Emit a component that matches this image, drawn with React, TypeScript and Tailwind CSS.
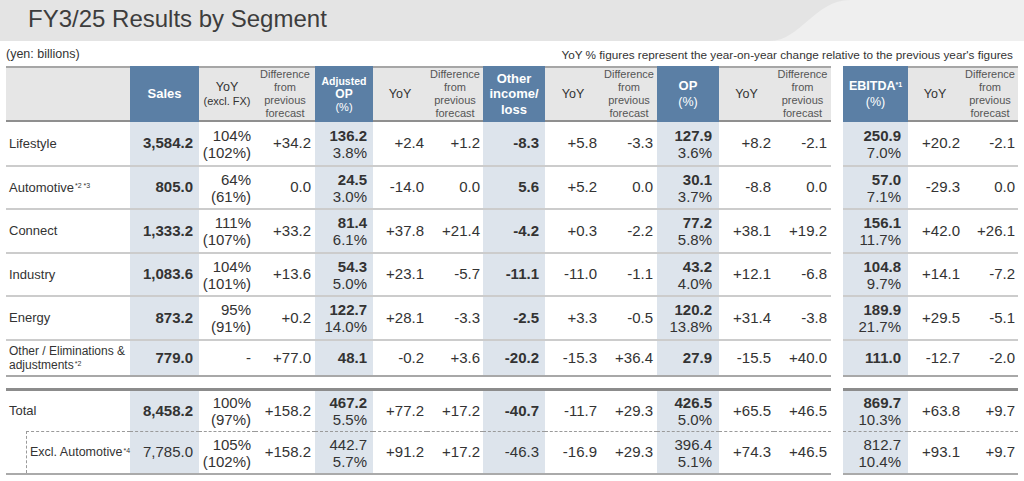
import React from "react";

type V = string | [string, string];

const GRID =
  "grid grid-cols-[124px_69px_56px_60px_58px_54px_56px_62px_56px_56px_62px_55px_57px_12px_65px_54px_56px]";

// which columns carry the blue heading / tinted body
const BLUE = [1, 4, 7, 10, 14];

// right padding per column so the figures sit where they do in the deck
const PAD = [
  "",
  "pr-[6px]",
  "pr-[4px]",
  "pr-[4px]",
  "pr-[6px]",
  "pr-[3px]",
  "pr-[3px]",
  "pr-[6px]",
  "pr-[4px]",
  "pr-[4px]",
  "pr-[7px]",
  "pr-[3px]",
  "pr-[4px]",
  "",
  "pr-[7px]",
  "pr-[2px]",
  "pr-[3px]",
];

const rows: { label: React.ReactNode; h: string; last?: boolean; values: V[] }[] = [
  {
    label: "Lifestyle",
    h: "h-[45px]",
    values: ["3,584.2", ["104%", "(102%)"], "+34.2", ["136.2", "3.8%"], "+2.4", "+1.2", "-8.3", "+5.8", "-3.3", ["127.9", "3.6%"], "+8.2", "-2.1", ["250.9", "7.0%"], "+20.2", "-2.1"],
  },
  {
    label: (
      <span className="whitespace-nowrap">
        Automotive<sup className="text-[7px] ml-[1px]">*2 *3</sup>
      </span>
    ),
    h: "h-[43px]",
    values: ["805.0", ["64%", "(61%)"], "0.0", ["24.5", "3.0%"], "-14.0", "0.0", "5.6", "+5.2", "0.0", ["30.1", "3.7%"], "-8.8", "0.0", ["57.0", "7.1%"], "-29.3", "0.0"],
  },
  {
    label: "Connect",
    h: "h-[44px]",
    values: ["1,333.2", ["111%", "(107%)"], "+33.2", ["81.4", "6.1%"], "+37.8", "+21.4", "-4.2", "+0.3", "-2.2", ["77.2", "5.8%"], "+38.1", "+19.2", ["156.1", "11.7%"], "+42.0", "+26.1"],
  },
  {
    label: "Industry",
    h: "h-[43px]",
    values: ["1,083.6", ["104%", "(101%)"], "+13.6", ["54.3", "5.0%"], "+23.1", "-5.7", "-11.1", "-11.0", "-1.1", ["43.2", "4.0%"], "+12.1", "-6.8", ["104.8", "9.7%"], "+14.1", "-7.2"],
  },
  {
    label: "Energy",
    h: "h-[44px]",
    values: ["873.2", ["95%", "(91%)"], "+0.2", ["122.7", "14.0%"], "+28.1", "-3.3", "-2.5", "+3.3", "-0.5", ["120.2", "13.8%"], "+31.4", "-3.8", ["189.9", "21.7%"], "+29.5", "-5.1"],
  },
  {
    label: (
      <span className="text-[12px] leading-[14px] block">
        Other / Eliminations &amp;
        <br />
        adjustments<sup className="text-[7px] ml-[1px]">*2</sup>
      </span>
    ),
    h: "h-[36px]",
    last: true,
    values: ["779.0", "-", "+77.0", "48.1", "-0.2", "+3.6", "-20.2", "-15.3", "+36.4", "27.9", "-15.5", "+40.0", "111.0", "-12.7", "-2.0"],
  },
];

const total: V[] = ["8,458.2", ["100%", "(97%)"], "+158.2", ["467.2", "5.5%"], "+77.2", "+17.2", "-40.7", "-11.7", "+29.3", ["426.5", "5.0%"], "+65.5", "+46.5", ["869.7", "10.3%"], "+63.8", "+9.7"];
const excl: V[] = ["7,785.0", ["105%", "(102%)"], "+158.2", ["442.7", "5.7%"], "+91.2", "+17.2", "-46.3", "-16.9", "+29.3", ["396.4", "5.1%"], "+74.3", "+46.5", ["812.7", "10.4%"], "+93.1", "+9.7"];

// insert the spacer column between OP and EBITDA blocks
function withGap(values: V[]): (V | null)[] {
  return [...values.slice(0, 12), null, ...values.slice(12)];
}

function Figure({ v, bold }: { v: V; bold: boolean }) {
  if (Array.isArray(v)) {
    return (
      <div className="flex flex-col items-end leading-[17px]">
        <span className={bold ? "font-bold" : ""}>{v[0]}</span>
        <span>{v[1]}</span>
      </div>
    );
  }
  return <span className={bold ? "font-bold" : ""}>{v}</span>;
}

function Diff() {
  return (
    <div className="text-[11px] leading-[13px] text-[#555] text-center">
      Difference
      <br />
      from
      <br />
      previous
      <br />
      forecast
    </div>
  );
}

function Yoy() {
  return <span className="text-[12.5px] text-[#333]">YoY</span>;
}

function HeaderRow() {
  const cells: React.ReactNode[] = [
    null,
    <span className="text-[13px] font-bold">Sales</span>,
    <div className="text-center leading-[14px] text-[#333]">
      <div className="text-[12.5px]">YoY</div>
      <div className="text-[11px]">(excl. FX)</div>
    </div>,
    <Diff />,
    <div className="text-center leading-[13px]">
      <div className="text-[10.5px] font-bold">Adjusted</div>
      <div className="text-[12px] font-bold">OP</div>
      <div className="text-[11px]">(%)</div>
    </div>,
    <Yoy />,
    <Diff />,
    <div className="text-center text-[13px] font-bold leading-[15.5px]">
      Other
      <br />
      income/
      <br />
      loss
    </div>,
    <Yoy />,
    <Diff />,
    <div className="text-center leading-[16px]">
      <div className="text-[13px] font-bold">OP</div>
      <div className="text-[12.5px]">(%)</div>
    </div>,
    <Yoy />,
    <Diff />,
    null,
    <div className="text-center leading-[16px]">
      <div className="text-[12.5px] font-bold">
        EBITDA<sup className="text-[7px]">*1</sup>
      </div>
      <div className="text-[12.5px]">(%)</div>
    </div>,
    <Yoy />,
    <Diff />,
  ];
  return (
    <div className={`${GRID} h-[56px]`}>
      {cells.map((c, i) =>
        i === 13 ? (
          <div key={i} />
        ) : (
          <div
            key={i}
            className={
              BLUE.includes(i)
                ? "flex items-center justify-center bg-[#5b7fa5] text-white border-y-2 border-[#5b7fa5]"
                : "flex items-center justify-center bg-[#e6e6e6] border-t-2 border-t-[#a6a6a6] border-b-2 border-b-[#8f8f8f]"
            }
          >
            {c}
          </div>
        )
      )}
    </div>
  );
}

function BodyRow({
  label,
  values,
  h,
  border,
  boldBlue,
}: {
  label: React.ReactNode;
  values: V[];
  h: string;
  border: string;
  boldBlue: boolean;
}) {
  const cells = withGap(values);
  return (
    <div className={`${GRID} ${h}`}>
      <div className={`flex items-center pl-[3px] text-[13px] text-[#333] ${border}`}>{label}</div>
      {cells.map((v, idx) => {
        const i = idx + 1;
        if (v === null) return <div key={i} />;
        const blue = BLUE.includes(i);
        return (
          <div
            key={i}
            className={`flex items-center justify-end text-[15px] text-[#333] ${PAD[i]} ${border} ${blue ? "bg-[#dde4ec]" : ""}`}
          >
            <Figure v={v} bold={boldBlue && blue} />
          </div>
        );
      })}
    </div>
  );
}

function ExclRow() {
  const cells = withGap(excl);
  return (
    <div className={`${GRID} h-[44px]`}>
      <div className="flex border-b-2 border-b-[#aaaaaa]">
        <div className="w-[20px] shrink-0" />
        <div className="flex-1 flex items-center pl-[3px] text-[12.5px] text-[#333] border-l border-t border-dashed border-[#9a9a9a]">
          <span className="whitespace-nowrap">
            Excl. Automotive<sup className="text-[7px] ml-[1px]">*4</sup>
          </span>
        </div>
      </div>
      {cells.map((v, idx) => {
        const i = idx + 1;
        if (v === null) return <div key={i} />;
        const blue = BLUE.includes(i);
        return (
          <div
            key={i}
            className={`flex items-center justify-end text-[15px] text-[#333] ${PAD[i]} border-t border-t-[#9a9a9a] border-dashed border-b-2 border-b-[#aaaaaa] [border-bottom-style:solid] ${blue ? "bg-[#dde4ec]" : ""}`}
          >
            <Figure v={v} bold={false} />
          </div>
        );
      })}
    </div>
  );
}

export default function App() {
  return (
    <div className="w-[1024px] h-[481px] bg-white font-['Liberation_Sans',Arial,sans-serif] overflow-hidden">
      <div className="relative h-[41px] bg-[#e4e4e4]">
        <svg className="absolute inset-0" width="1024" height="41" viewBox="0 0 1024 41">
          <path d="M770 41 C 800 41, 815 0, 850 0 L 1024 0 L 1024 41 Z" fill="#efefef" />
        </svg>
        <div className="relative h-full flex items-center pb-[4px] pl-[28px] text-[24px] text-[#3d3d3d]">
          FY3/25 Results by Segment
        </div>
      </div>
      <div className="h-[25px] flex items-end justify-between px-[6px] pb-[4px] text-[#333]">
        <span className="text-[12.5px] leading-[15px]">(yen: billions)</span>
        <span className="text-[11.75px] leading-[15px] pr-[5px]">
          YoY % figures represent the year-on-year change relative to the previous year's figures
        </span>
      </div>
      <div className="px-[6px]">
        <HeaderRow />
        {rows.map((r, i) => (
          <BodyRow
            key={i}
            label={r.label}
            values={r.values}
            h={r.h}
            boldBlue
            border={r.last ? "border-b-2 border-[#a8a8a8]" : "border-b-2 border-[#cccccc]"}
          />
        ))}
        <div className="h-[11px]" />
        <BodyRow
          label="Total"
          values={total}
          h="h-[43px]"
          boldBlue
          border="border-t-[3px] border-[#8c8c8c]"
        />
        <ExclRow />
      </div>
    </div>
  );
}
